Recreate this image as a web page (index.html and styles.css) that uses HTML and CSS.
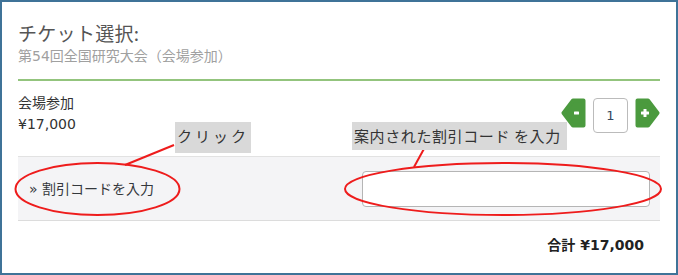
FILE: index.html
```html
<!DOCTYPE html>
<html lang="ja">
<head>
<meta charset="utf-8">
<title>チケット選択</title>
<link rel="stylesheet" href="styles.css">
</head>
<body>
<div class="frame">
  <div class="panel">
    <header class="head">
      <h1 class="title">チケット選択:</h1>
      <p class="sub">第54回全国研究大会（会場参加）</p>
    </header>
    <div class="ticket">
      <div class="info">
        <div class="name">会場参加</div>
        <div class="price">¥17,000</div>
      </div>
      <div class="stepper">
        <button class="arrow" type="button" aria-label="減らす">
          <svg width="25" height="30" viewBox="0 0 25 30"><polygon points="2.5,15 12,2.5 22.5,2.5 22.5,27.5 12,27.5" fill="#4b9a3e" stroke="#4b9a3e" stroke-width="4" stroke-linejoin="round"/><rect x="13" y="13.5" width="5" height="3" rx="0.5" fill="#fff"/></svg>
        </button>
        <div class="qty">1</div>
        <button class="arrow" type="button" aria-label="増やす">
          <svg width="25" height="30" viewBox="0 0 25 30"><polygon points="22.5,15 13,2.5 2.5,2.5 2.5,27.5 13,27.5" fill="#4b9a3e" stroke="#4b9a3e" stroke-width="4" stroke-linejoin="round"/><rect x="6" y="13.5" width="8" height="3" rx="0.5" fill="#fff"/><rect x="8.5" y="11" width="3" height="8" rx="0.5" fill="#fff"/></svg>
        </button>
      </div>
    </div>
    <div class="coupon">
      <span class="toggle">» 割引コードを入力</span>
      <input class="code" type="text">
    </div>
    <div class="total">合計 ¥17,000</div>
  </div>

  <svg class="marks" width="678" height="275" viewBox="0 0 678 275">
    <ellipse cx="97.5" cy="189" rx="82" ry="26" fill="none" stroke="#ee1c1c" stroke-width="2"/>
    <ellipse cx="503" cy="189" rx="158" ry="26" fill="none" stroke="#ee1c1c" stroke-width="2"/>
    <line x1="174" y1="145" x2="125" y2="165" stroke="#ee1c1c" stroke-width="2"/>
    <line x1="425" y1="147" x2="414" y2="167" stroke="#ee1c1c" stroke-width="2"/>
  </svg>
  <div class="callout c1">クリック</div>
  <div class="callout c2">案内された割引コード を入力</div>
</div>
</body>
</html>
```
FILE: styles.css
```css
* { box-sizing: border-box; }
html, body { margin: 0; padding: 0; background: #fff; }
body {
  font-family: "DejaVu Sans", "Noto Sans CJK JP", sans-serif;
  color: #333;
}
.frame {
  position: relative;
  width: 678px;
  height: 275px;
  border: 2px solid #3f7398;
  overflow: hidden;
}
.panel {
  padding: 0 16px;
}
.head {
  padding-top: 18px;
  padding-bottom: 13px;
  border-bottom: 2px solid #93c47d;
}
.title {
  margin: 0;
  font-family: "Noto Sans CJK JP", sans-serif;
  font-weight: 400;
  font-size: 19px;
  line-height: 26px;
  color: #555;
  letter-spacing: 0.3px;
}
.sub {
  margin: 0;
  font-size: 14px;
  line-height: 20px;
  color: #a0a0a0;
}
.ticket {
  display: flex;
  justify-content: space-between;
  align-items: flex-start;
  height: 75px;
  padding-top: 12px;
}
.name, .price {
  font-size: 14px;
  line-height: 20px;
  color: #333;
}
.price { margin-top: 1px; }
.stepper {
  display: flex;
  align-items: flex-start;
  gap: 7px;
  margin-top: 5px;
}
.arrow {
  display: block;
  width: 25px;
  height: 30px;
  padding: 0;
  border: 0;
  background: none;
}
.arrow svg { display: block; }
.qty {
  width: 35px;
  height: 35px;
  border: 1px solid #bbb;
  border-radius: 4px;
  display: flex;
  align-items: center;
  justify-content: center;
  font-size: 13px;
  color: #34495e;
}
.coupon {
  display: flex;
  align-items: center;
  justify-content: space-between;
  background: #f4f4f6;
  border-top: 1px solid #e2e2e2;
  border-bottom: 1px solid #dcdcdc;
  padding: 14px 10px 13px 11px;
}
.toggle {
  font-size: 14px;
  line-height: 20px;
  color: #34383d;
}
.code {
  width: 288px;
  height: 36px;
  border: 1px solid #b5b5b5;
  border-radius: 4px;
  background: #fff;
  margin: 0;
}
.total {
  text-align: right;
  padding-top: 14px;
  padding-right: 16px;
  font-size: 14px;
  line-height: 20px;
  font-weight: 700;
  color: #222;
}
.marks {
  position: absolute;
  left: -2px;
  top: -2px;
  pointer-events: none;
}
.callout {
  position: absolute;
  background: #d9d9d9;
  font-family: "Noto Sans CJK JP", sans-serif;
  font-size: 15px;
  line-height: 24px;
  color: #333;
  padding: 2px 2px 0 2px;
  letter-spacing: 1px;
}
.c1 { left: 173px; top: 120px; width: 76px; height: 31px; letter-spacing: 3px; }
.c2 { left: 350px; top: 120px; width: 215px; height: 28px; letter-spacing: 0.6px; }
```
